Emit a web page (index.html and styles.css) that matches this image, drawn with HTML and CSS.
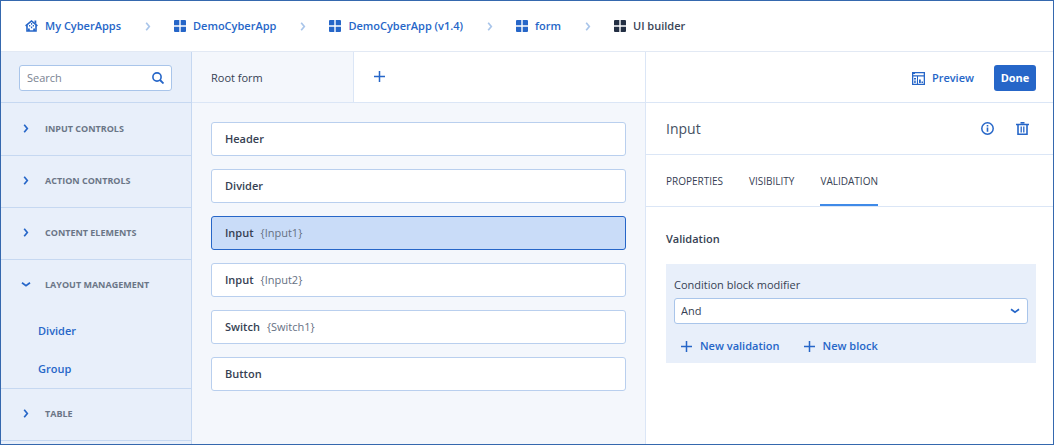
FILE: index.html
```html
<!DOCTYPE html>
<html lang="en">
<head>
<meta charset="utf-8">
<title>UI builder</title>
<link rel="stylesheet" href="styles.css">
</head>
<body>
<svg class="defs" aria-hidden="true">
  <symbol id="grid" viewBox="0 0 12 12"><path fill="currentColor" d="M1 0h4.300v5.300H0V1a1 1 0 0 1 1-1zM6.700 0H11a1 1 0 0 1 1 1v4.300H6.700zM0 6.700h5.300V12H1a1 1 0 0 1-1-1zM6.700 6.700H12V11a1 1 0 0 1-1 1H6.700z"/></symbol>
  <symbol id="chevron" viewBox="0 0 6 9"><path fill="none" stroke="currentColor" stroke-width="1.700" d="M1.200.8 4.300 4.500 1.200 8.200"/></symbol>
  <symbol id="chevron-down" viewBox="0 0 10 6"><path fill="none" stroke="currentColor" stroke-width="1.700" d="M1 1.200 5 4.200 9 1.200"/></symbol>
  <symbol id="plus" viewBox="0 0 11 11"><path fill="none" stroke="currentColor" stroke-width="1.500" d="M5.500 0v11M0 5.500h11"/></symbol>
</svg>
<div class="app">
  <nav class="crumbs" aria-label="Breadcrumb">
    <a class="crumb" href="#"><svg class="icon-home" viewBox="0 0 13 12"><path fill="none" stroke="currentColor" stroke-width="1.600" d="M.6 5.800 6.500 1l5.900 4.800M2 5v6h9V5"/><path fill="currentColor" d="M9.500.5h1.800v3.500L9.500 2.800zM6 3h1.200v1.800H6zM4 5h1.300v1.600H4zM7.700 5H9v1.600H7.700zM5.900 6.500h1.300v1.700H5.900zM3 8.500h1.800V11H3zM8.200 8.500H10V11H8.200z"/></svg>My CyberApps</a>
    <svg class="sep"><use href="#chevron"/></svg>
    <a class="crumb" href="#"><svg class="icon-grid"><use href="#grid"/></svg>DemoCyberApp</a>
    <svg class="sep"><use href="#chevron"/></svg>
    <a class="crumb" href="#"><svg class="icon-grid"><use href="#grid"/></svg>DemoCyberApp (v1.4)</a>
    <svg class="sep"><use href="#chevron"/></svg>
    <a class="crumb" href="#"><svg class="icon-grid"><use href="#grid"/></svg>form</a>
    <svg class="sep"><use href="#chevron"/></svg>
    <span class="crumb current" aria-current="page"><svg class="icon-grid"><use href="#grid"/></svg>UI builder</span>
  </nav>
  <div class="workspace">
    <aside class="sidebar">
      <div class="search-row">
        <label class="search">
          <input type="text" placeholder="Search" aria-label="Search">
          <svg class="icon-search" viewBox="0 0 12 12"><circle cx="5" cy="5" r="4.100" fill="none" stroke="currentColor" stroke-width="1.600"/><path stroke="currentColor" stroke-width="1.800" d="m8 8 3.500 3.500"/></svg>
        </label>
      </div>
      <div class="groups">
        <section class="group"><button class="group-head"><svg class="chev"><use href="#chevron"/></svg>INPUT CONTROLS</button></section>
        <section class="group"><button class="group-head"><svg class="chev"><use href="#chevron"/></svg>ACTION CONTROLS</button></section>
        <section class="group"><button class="group-head"><svg class="chev"><use href="#chevron"/></svg>CONTENT ELEMENTS</button></section>
        <section class="group">
          <button class="group-head" aria-expanded="true"><svg class="chev"><use href="#chevron-down"/></svg>LAYOUT MANAGEMENT</button>
          <div class="elements">
            <a class="element" href="#">Divider</a>
            <a class="element" href="#">Group</a>
          </div>
        </section>
        <section class="group"><button class="group-head"><svg class="chev"><use href="#chevron"/></svg>TABLE</button></section>
      </div>
    </aside>
    <main class="canvas">
      <div class="form-tabs">
        <button class="form-tab">Root form</button>
        <button class="add-tab" aria-label="Add form"><svg class="icon-plus"><use href="#plus"/></svg></button>
      </div>
      <div class="components">
        <button class="component">Header</button>
        <button class="component">Divider</button>
        <button class="component selected">Input <span class="key">{Input1}</span></button>
        <button class="component">Input <span class="key">{Input2}</span></button>
        <button class="component">Switch <span class="key">{Switch1}</span></button>
        <button class="component">Button</button>
      </div>
    </main>
    <aside class="inspector">
      <div class="toolbar">
        <button class="preview"><svg class="icon-preview" viewBox="0 0 13 13"><path fill="none" stroke="currentColor" stroke-width="1.300" d="M.65.65h11.700v11.700H.65z"/><path fill="currentColor" d="M1 1h2v1H1zM1 3.200h11v1.300H1zM5 4.500h1V12H5zM2 6h2v1.500H2zM2 8.500h.8V11H2zM3.300 8.500h.8V11h-.8zM7 7.500h1.800V11H7zM9.500 9.500H11V11H9.500z"/></svg>Preview</button>
        <button class="done">Done</button>
      </div>
      <div class="title-row">
        <h1>Input</h1>
        <button class="tool" aria-label="Info"><svg class="icon-tool" viewBox="0 0 13 13"><circle cx="6.500" cy="6.500" r="5.700" fill="none" stroke="currentColor" stroke-width="1.500"/><path fill="currentColor" d="M5.700 3h1.600v1.500H5.700zM5.700 5.500h1.600v4.300H5.700z"/></svg></button>
        <button class="tool" aria-label="Delete"><svg class="icon-tool" viewBox="0 0 13 13"><path fill="none" stroke="currentColor" stroke-width="1.600" d="M0 2.500h13M4.500.8h4M2 3v9.200h9V3"/><path fill="none" stroke="currentColor" stroke-width="1.300" d="M5.200 4.500v6M7.800 4.500v6"/></svg></button>
      </div>
      <div class="tabs" role="tablist">
        <button class="tab" role="tab">PROPERTIES</button>
        <button class="tab" role="tab">VISIBILITY</button>
        <button class="tab active" role="tab" aria-selected="true">VALIDATION</button>
      </div>
      <div class="panel">
        <h2>Validation</h2>
        <div class="block">
          <label for="modifier">Condition block modifier</label>
          <div class="select"><select id="modifier"><option>And</option><option>Or</option></select><svg class="caret"><use href="#chevron-down"/></svg></div>
          <div class="actions">
            <button class="add"><svg class="icon-plus"><use href="#plus"/></svg>New validation</button>
            <button class="add"><svg class="icon-plus"><use href="#plus"/></svg>New block</button>
          </div>
        </div>
      </div>
    </aside>
  </div>
</div>
</body>
</html>
```

FILE: styles.css
```css
:root {
  --blue: #2666c8;
  --ink: #364153;
  --line: #dbe6f6;
  --side-line: #c6d8f1;
  --field-line: #a9c5ea;
  --pale: #e8effa;
}
* { box-sizing: border-box; }
body { margin: 0; font: 11px/16px "Open Sans", "Noto Sans", sans-serif; color: var(--ink); background: #fff; }
button, input, select { font: inherit; color: inherit; border: 0; padding: 0; margin: 0; background: none; }
button { cursor: pointer; }
svg { display: block; flex: none; }
h1, h2 { margin: 0; }
a { text-decoration: none; color: var(--blue); }
.defs { display: none; }
.app { display: flex; flex-direction: column; height: 100vh; border: 1px solid #3568ae; overflow: hidden; }

.crumbs { display: flex; align-items: center; flex: none; height: 51px; padding: 0 24px; border-bottom: 1px solid #e2e9f4; }
.crumb { display: flex; align-items: center; gap: 7px; font-weight: 600; color: var(--blue); white-space: nowrap; }
.crumb.current { color: #3b4557; }
.crumb.current svg { color: #232f43; }
.icon-home { width: 13px; height: 12px; }
.icon-grid { width: 12px; height: 12px; }
.sep { width: 6px; height: 9px; margin: 0 23px 0 24px; color: #a9c5ea; }

.workspace { display: grid; grid-template-columns: 191px minmax(0, 454fr) minmax(0, 407fr); flex: 1; min-height: 0; }
.sidebar { background: var(--pale); border-right: 1px solid var(--side-line); overflow: hidden; }
.search-row { height: 51px; padding: 13px 19px 0 18px; border-bottom: 1px solid var(--side-line); }
.search { display: flex; align-items: center; height: 26px; padding: 0 7px; background: #fff; border: 1px solid var(--field-line); border-radius: 3px; }
.search input { flex: 1; min-width: 0; outline: 0; }
.search input::placeholder { color: #7a8392; opacity: 1; }
.icon-search { width: 12px; height: 12px; color: var(--blue); }
.groups { padding-top: 1px; }
.group { border-bottom: 1px solid var(--side-line); }
.group-head { display: flex; align-items: center; gap: 14px; width: 100%; height: 51px; padding: 0 0 2px 20px; font-size: 9px; font-weight: 700; color: #6b7687; }
.chev { width: 10px; height: 9px; color: var(--blue); }
.elements { padding-top: 1px; }
.element { display: block; padding: 11px 37px; font-weight: 600; }

.canvas { display: flex; flex-direction: column; background: #f4f7fc; border-right: 1px solid var(--line); }
.form-tabs { display: flex; height: 51px; background: #fff; border-bottom: 1px solid var(--line); }
.form-tab { width: 162px; padding: 2px 0 0 19px; text-align: left; background: #f4f7fc; border-right: 1px solid var(--line); }
.add-tab { padding: 0 20px 2px; }
.icon-plus { width: 11px; height: 11px; color: var(--blue); }
.components { display: flex; flex-direction: column; gap: 13px; padding: 19px; }
.component { display: flex; align-items: center; gap: 7px; height: 34px; padding: 0 13px; font-weight: 600; text-align: left; background: #fff; border: 1px solid #b9cfee; border-radius: 3px; }
.component.selected { background: #c9dcf8; border-color: var(--blue); }
.key { font-weight: 400; color: #667183; }

.inspector { background: #fff; }
.toolbar { display: flex; align-items: center; justify-content: flex-end; gap: 20px; height: 51px; padding: 2px 17px 0 0; border-bottom: 1px solid var(--line); }
.preview { display: flex; align-items: center; gap: 7px; font-weight: 600; color: var(--blue); }
.icon-preview { width: 13px; height: 13px; }
.done { width: 42px; height: 26px; font-weight: 700; color: #fff; background: var(--blue); border-radius: 3px; }
.title-row { display: flex; align-items: center; gap: 22px; height: 52px; padding: 0 24px 0 20px; border-bottom: 1px solid var(--line); }
h1 { flex: 1; font-size: 14px; font-weight: 400; line-height: 20px; color: #465163; }
.icon-tool { width: 13px; height: 13px; color: var(--blue); }
.tabs { display: flex; gap: 26px; height: 52px; padding: 0 20px; border-bottom: 1px solid var(--line); }
.tab { font-size: 10px; border-top: 2px solid transparent; border-bottom: 2px solid transparent; }
.tab.active { border-bottom-color: #3f8ae8; }
.panel { padding: 24px 17px 0 20px; }
h2 { font-size: 11px; font-weight: 600; line-height: 16px; }
.block { margin-top: 17px; padding: 13px 8px 9px; background: var(--pale); }
.block label { display: block; }
.select { position: relative; margin-top: 5px; }
.select select { width: 100%; height: 26px; padding: 0 6px; appearance: none; background: #fff; border: 1px solid var(--field-line); border-radius: 3px; }
.caret { position: absolute; right: 8px; top: 10px; width: 10px; height: 6px; color: var(--blue); pointer-events: none; }
.actions { display: flex; gap: 24px; padding: 14px 7px 0; }
.add { display: flex; align-items: center; gap: 8px; font-weight: 600; color: var(--blue); }
```
